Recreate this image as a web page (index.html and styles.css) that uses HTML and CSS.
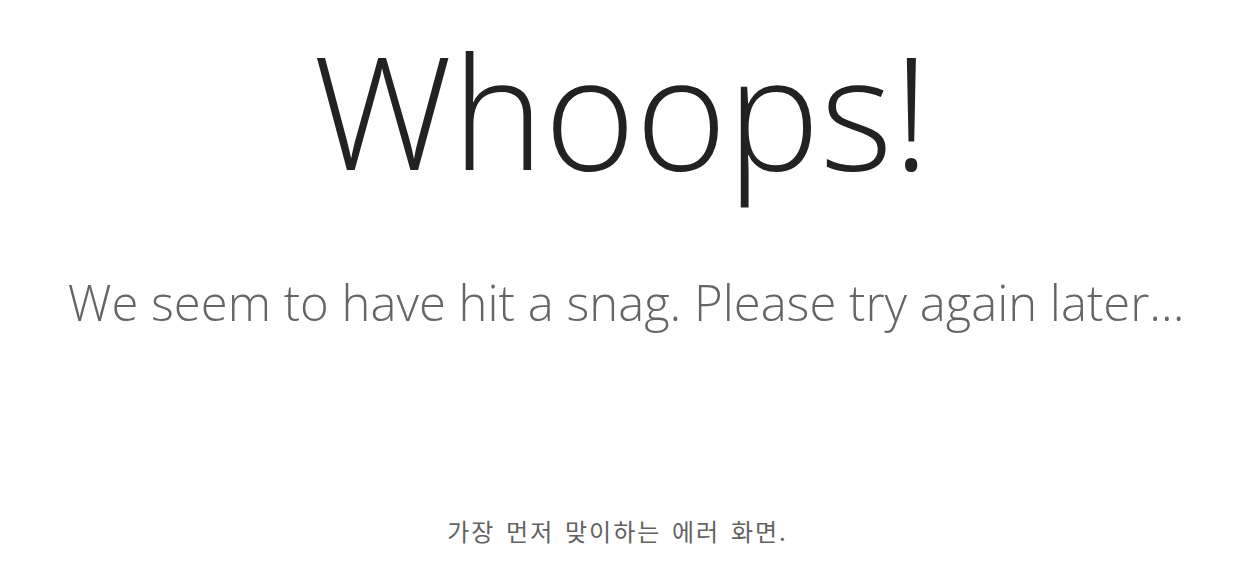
FILE: index.html
```html
<!DOCTYPE html>
<html lang="ko">
<head>
<meta charset="utf-8">
<title>Whoops!</title>
<link rel="stylesheet" href="styles.css">
</head>
<body>
<main class="page">
  <h1 class="title">Whoops!</h1>
  <p class="subtitle">We seem to have hit a snag. Please try again later...</p>
  <p class="caption">가장 먼저 맞이하는 에러 화면.</p>
</main>
</body>
</html>
```
FILE: styles.css
```css
html, body {
  margin: 0;
  padding: 0;
  background: #ffffff;
}
.page {
  display: flex;
  flex-direction: column;
  align-items: center;
  width: 1252px;
  height: 564px;
  font-family: "Open Sans", "Noto Sans", sans-serif;
}
.title {
  margin: 32px 9px 0 0;
  font-size: 156px;
  font-weight: 300;
  line-height: 1;
  color: #222222;
}
.subtitle {
  margin: 90px 0 0 0;
  font-size: 49px;
  font-weight: 300;
  line-height: 1;
  color: #656565;
}
.caption {
  margin: 192px 17px 0 0;
  font-family: "Noto Sans CJK KR", "Noto Sans", sans-serif;
  font-size: 24px;
  font-weight: 400;
  line-height: 1;
  letter-spacing: 2px;
  word-spacing: 2px;
  color: #626262;
}
```
